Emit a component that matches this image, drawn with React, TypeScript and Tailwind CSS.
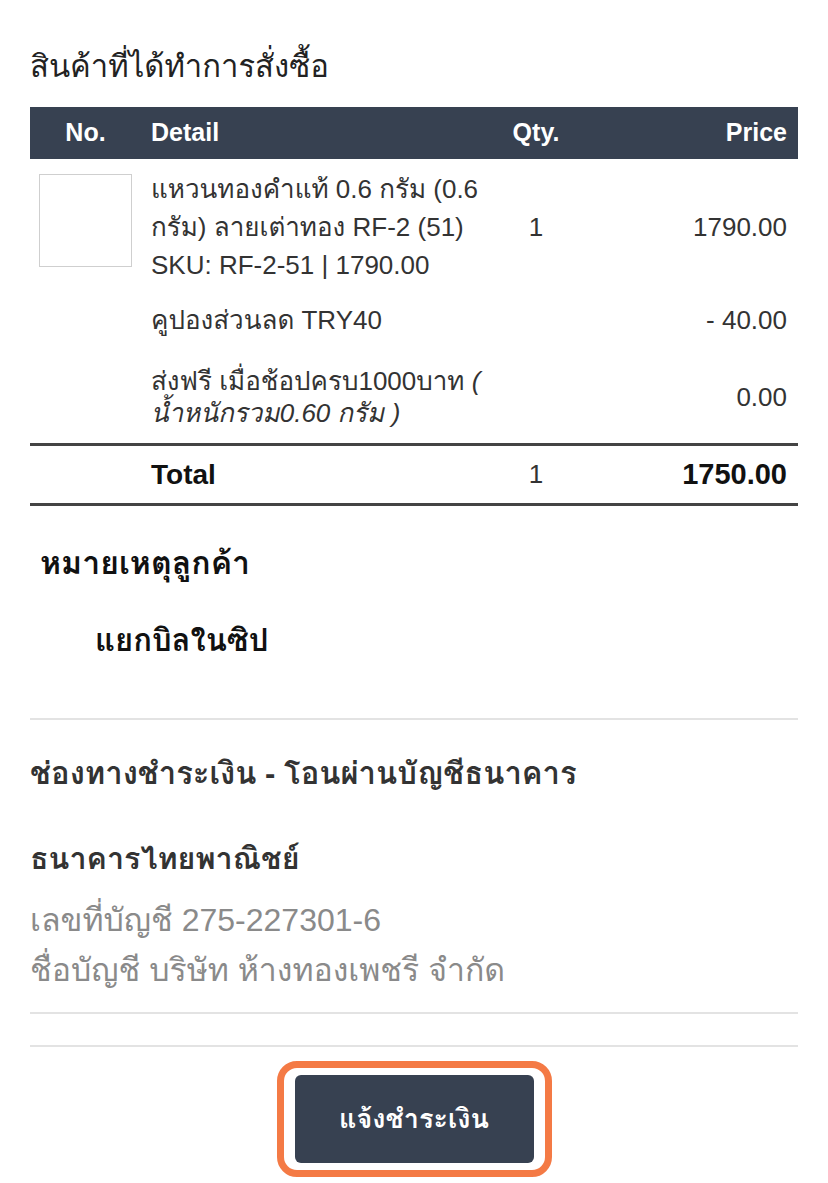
import React from "react";

const cols = "grid grid-cols-[111px_349px_92px_215px]";

export default function App() {
  return (
    <div className="min-h-[1183px] w-[828px] bg-white font-[family-name:'Liberation_Sans',Loma,sans-serif] text-[#333]">
      <div className="px-[30px]">
        <h2 className="pt-[48px] text-[31px] leading-[38px] text-[#222]">สินค้าที่ได้ทำการสั่งซื้อ</h2>

        <div className="mt-[21px]">
          <div className={`${cols} h-[52px] items-center bg-[#374151] text-[25px] font-bold text-white`}>
            <div className="text-center">No.</div>
            <div className="pl-[10px]">Detail</div>
            <div className="text-center">Qty.</div>
            <div className="pr-[10px] text-right">Price</div>
          </div>

          <div className={`${cols} pt-[11px] pb-[8px] text-[26px] leading-[38px]`}>
            <div>
              <div className="ml-[9px] mt-[4px] h-[93px] w-[93px] border border-[#cfcfcf]" />
            </div>
            <div className="whitespace-nowrap pl-[10px]">
              แหวนทองคำแท้ 0.6 กรัม (0.6
              <br />
              กรัม) ลายเต่าทอง RF-2 (51)
              <br />
              SKU: RF-2-51 | 1790.00
            </div>
            <div className="self-center text-center">1</div>
            <div className="self-center pr-[10px] text-right">1790.00</div>
          </div>

          <div className={`${cols} pt-[9px] pb-[9px] text-[26px] leading-[38px]`}>
            <div />
            <div className="pl-[10px]">คูปองส่วนลด TRY40</div>
            <div />
            <div className="pr-[10px] text-right">- 40.00</div>
          </div>

          <div className={`${cols} pt-[17px] pb-[14px] text-[26px] leading-[32px]`}>
            <div />
            <div className="whitespace-nowrap pl-[10px]">
              ส่งฟรี เมื่อช้อปครบ1000บาท <i>(</i>
              <br />
              <i>น้ำหนักรวม0.60 กรัม )</i>
            </div>
            <div />
            <div className="self-center pr-[10px] text-right">0.00</div>
          </div>

          <div className={`${cols} h-[63px] items-center border-y-[3px] border-[#444]`}>
            <div />
            <div className="pl-[10px] text-[28px] font-bold text-[#111]">Total</div>
            <div className="text-center text-[26px]">1</div>
            <div className="pr-[10px] text-right text-[29px] font-bold text-[#111]">1750.00</div>
          </div>
        </div>

        <div className="mt-[38px] pl-[10px] text-[32px] font-bold leading-[38px] text-[#111]">หมายเหตุลูกค้า</div>
        <div className="mt-[40px] pl-[65px] text-[31px] font-bold leading-[38px] text-[#111]">แยกบิลในซิป</div>

        <div className="mt-[58px] h-[2px] bg-[#e3e3e3]" />

        <div className="mt-[34px] text-[31px] font-bold leading-[40px] text-[#333]">
          ช่องทางชำระเงิน - โอนผ่านบัญชีธนาคาร
        </div>
        <div className="mt-[44px] text-[30.5px] font-bold leading-[40px] text-[#333]">ธนาคารไทยพาณิชย์</div>
        <div className="mt-[17px] text-[32px] leading-[50px] text-[#8a8a8a]">
          <div>เลขที่บัญชี 275-227301-6</div>
          <div>ชื่อบัญชี บริษัท ห้างทองเพชรี จำกัด</div>
        </div>

        <div className="mt-[17px] h-[2px] bg-[#e3e3e3]" />
        <div className="mt-[31px] h-[2px] bg-[#e3e3e3]" />

        <div className="mt-[14px] flex justify-center">
          <div className="rounded-[20px] border-[7px] border-[#f47a45] px-[11px] py-[7px]">
            <button className="flex h-[88px] w-[239px] items-center justify-center rounded-[6px] bg-[#374151] text-[27px] font-bold text-white">
              แจ้งชำระเงิน
            </button>
          </div>
        </div>
      </div>
    </div>
  );
}
